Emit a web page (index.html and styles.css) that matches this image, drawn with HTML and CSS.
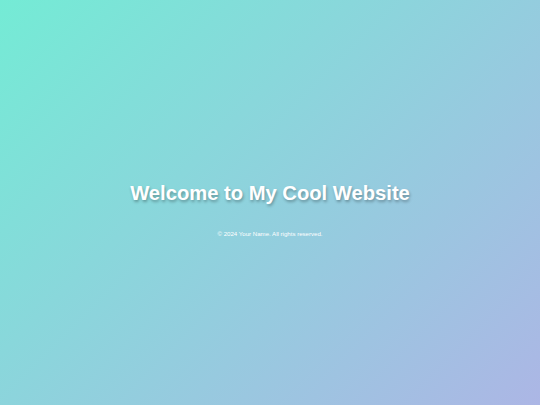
FILE: index.html
```html
<!DOCTYPE html>
<html lang="en">
<head>
<meta charset="utf-8">
<title>My Cool Website</title>
<link rel="stylesheet" href="styles.css">
</head>
<body>
<main class="page">
  <h1 class="title">Welcome to My Cool Website</h1>
  <footer class="footer">&copy; 2024 Your Name. All rights reserved.</footer>
</main>
</body>
</html>
```

FILE: styles.css
```css
html, body {
  margin: 0;
  padding: 0;
  height: 100%;
}
body {
  font-family: "Liberation Sans", Arial, sans-serif;
  background: linear-gradient(135deg, #74ebd5, #acb6e5);
  color: #fff;
}
.page {
  box-sizing: border-box;
  min-height: 100vh;
  padding-top: 13px;
  display: flex;
  flex-direction: column;
  align-items: center;
  justify-content: center;
}
.title {
  margin: 0;
  font-size: 20.2px;
  font-weight: bold;
  text-shadow: 1px 2px 3px rgba(0, 0, 0, 0.3);
}
.footer {
  margin-top: 25px;
  font-size: 6.1px;
}
```
